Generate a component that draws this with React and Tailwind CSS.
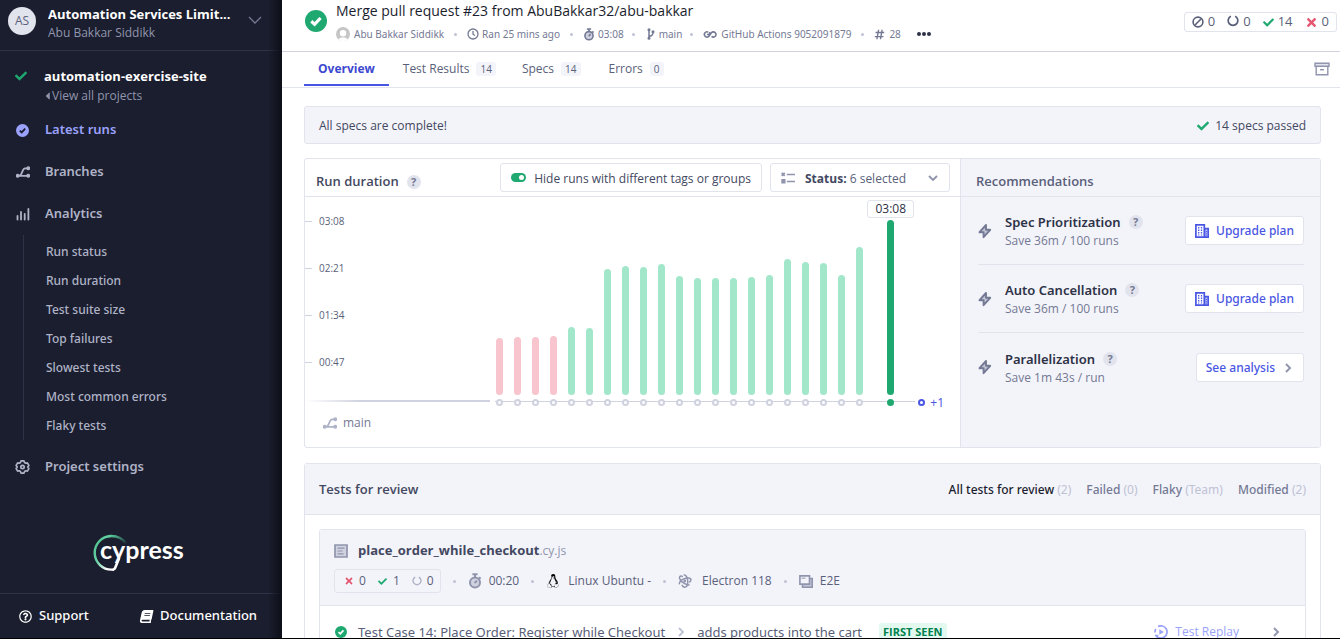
import React from "react";
import { FaCheck, FaTimes, FaLinux, FaBook, FaCaretLeft, FaHashtag, FaRegQuestionCircle } from "react-icons/fa";

const CheckCircle = ({ className }) => (
  <svg viewBox="0 0 16 16" className={className} aria-hidden="true">
    <circle cx="8" cy="8" r="8" fill="currentColor" />
    <path d="M4.6 8.2 7 10.4l4.3-4.6" fill="none" stroke="var(--tick)" strokeWidth="2.3" />
  </svg>
);

const BranchIcon = ({ className }) => (
  <svg viewBox="0 0 14 12" className={className} aria-hidden="true" fill="none" stroke="currentColor" strokeWidth="1.7">
    <path d="M1.5 9.8H12M3.5 9.5C6.5 9 6 2.5 9 2.3h3" />
    <circle cx="1.7" cy="9.8" r="1.1" fill="currentColor" />
    <circle cx="12.2" cy="9.8" r="1.1" fill="currentColor" />
    <circle cx="12.2" cy="2.2" r="1.1" fill="currentColor" />
  </svg>
);

const BarsIcon = () => (
  <svg viewBox="0 0 14 14" className="size-3.5" aria-hidden="true" fill="none" stroke="currentColor" strokeWidth="1.8" strokeLinecap="round">
    <path d="M1.5 9v3.5M5 5v7.5M8.7 7v5.5M12.4 2v10.5" />
  </svg>
);

const GearIcon = () => (
  <svg viewBox="0 0 16 16" className="size-4" aria-hidden="true" fill="none" stroke="currentColor" strokeWidth="1.8" strokeLinejoin="round">
    <path d="M6.4 1.5h3.2l.6 1.8 1.2.7 1.8-.4 1.6 2.7L13.6 8l1.2 1.7-1.6 2.7-1.8-.4-1.2.7-.6 1.8H6.4l-.6-1.8-1.2-.7-1.8.4-1.6-2.7L2.4 8 1.2 6.3l1.6-2.7 1.8.4 1.2-.7z" />
    <circle cx="8" cy="8" r="1.8" />
  </svg>
);

const Stopwatch = ({ className }) => (
  <svg viewBox="0 0 14 16" className={className} aria-hidden="true" fill="none" stroke="currentColor" strokeWidth="2">
    <circle cx="7" cy="9.5" r="5" fill="#d0d2e0" />
    <path d="M4.4 1.2h5.2M7 1.5v3M11 4.2l1.6 1.5M6.6 10 9 7.6" />
  </svg>
);

const Clock = () => (
  <svg viewBox="0 0 12 12" className="size-3" aria-hidden="true" fill="none" stroke="currentColor" strokeWidth="1.3">
    <circle cx="6" cy="6" r="5" />
    <path d="M6 3v3.2l2 1.3" />
  </svg>
);

const ForkIcon = () => (
  <svg viewBox="0 0 8 12" className="h-3 w-2" aria-hidden="true" fill="none" stroke="currentColor" strokeWidth="1.5">
    <path d="M2 1.5v9M2 8.2c3 0 4-1.2 4-4" />
    <circle cx="2" cy="1.8" r=".8" fill="currentColor" />
    <circle cx="2" cy="10.2" r=".8" fill="currentColor" />
    <circle cx="6" cy="3.8" r=".8" fill="currentColor" />
  </svg>
);

const LoopIcon = () => (
  <svg viewBox="0 0 16 10" className="h-[9px] w-3.5" aria-hidden="true" fill="none" stroke="currentColor" strokeWidth="1.8">
    <path d="M6 2.3A3 3 0 1 0 6.6 7.2L9.6 3a3 3 0 1 1 .2 4.2M4.5 5h3V2" />
  </svg>
);

const ArcIcon = ({ className }) => (
  <svg viewBox="0 0 12 12" className={className} aria-hidden="true" fill="none" stroke="currentColor" strokeWidth="1.7">
    <path d="M3.9 1.3A4.8 4.8 0 1 0 8.1 1.3" />
  </svg>
);

const BanIcon = () => (
  <svg viewBox="0 0 12 12" className="size-3" aria-hidden="true" fill="none" stroke="currentColor" strokeWidth="1.6">
    <circle cx="6" cy="6" r="4.9" />
    <path d="m2.8 9.2 6.4-6.4" />
  </svg>
);

const ArchiveIcon = () => (
  <svg viewBox="0 0 16 14" className="h-3.5 w-4" aria-hidden="true" fill="none" stroke="#9095ad" strokeWidth="1.4">
    <path d="M2.2 5v7.8h11.6V5" />
    <path d="M1 1.2h14v3H1z" fill="#e1e3ed" />
    <path d="M6 7.7h4" />
  </svg>
);

const Bolt = () => (
  <svg viewBox="0 0 14 16" className="h-4 w-3.5 text-[#747994]" aria-hidden="true" fill="#c2c5d6" stroke="currentColor" strokeWidth="1.9" strokeLinejoin="round">
    <path d="M8 2 1.5 9.2h4.1L5.6 14.2 12.2 6.8H8z" />
  </svg>
);

const Building = () => (
  <svg viewBox="0 0 14 14" className="size-3.5" aria-hidden="true" fill="none" stroke="currentColor" strokeWidth="1.7">
    <path d="M9.5 4.6h3.7v8.6H9.5z" fill="#c3c8fb" />
    <path d="M.9.9h8.4v12.3H.9z" fill="#fff" />
    <path d="M3.7 3v8.5M6.5 3v8.5" strokeDasharray="1.5 1" strokeWidth="1.3" />
    <path d="M11.4 7v5" strokeDasharray="1.2 1" strokeWidth="1" />
  </svg>
);

const Chevron = ({ className, d }) => (
  <svg viewBox="0 0 12 12" className={className} aria-hidden="true" fill="none" stroke="currentColor" strokeWidth="1.9">
    <path d={d} />
  </svg>
);
const RIGHT = "m4 2 4 4-4 4";

const StatusIcon = () => (
  <svg viewBox="0 0 14 12" className="h-3 w-3.5 text-[#9095ad]" aria-hidden="true" fill="none" stroke="currentColor" strokeWidth="1.7">
    <path d="m.7.9 3 3m0-3-3 3M5.8 2.5H14M5.8 9.5H14" />
    <path d="M.3 7h4.2v4.4H.3z" fill="currentColor" stroke="none" />
  </svg>
);

const SpecIcon = () => (
  <svg viewBox="0 0 14 14" className="size-3.5 text-[#9095ad]" aria-hidden="true" fill="#d0d2e0" stroke="currentColor" strokeWidth="1.7">
    <path d="M1 1h12v12H1z" />
    <path d="M3.5 4.2h7M3.5 7h5M3.5 9.8h6" strokeWidth="1.2" />
  </svg>
);

const ElectronIcon = () => (
  <svg viewBox="0 0 14 14" className="size-3.5 text-[#9095ad]" aria-hidden="true" fill="none" stroke="currentColor" strokeWidth="1.5" strokeLinecap="round">
    <path d="M4.3 2.4C3.3 2 2.2 2 1.7 2.7c-1 1.5 1 4.4 4.2 6.4 1.9 1.2 3.8 1.8 5.1 1.8" />
    <path d="M4.2 11.3C4.9 12.6 5.9 13.3 7 13.1c1.9-.3 3-3.2 2.7-6.5C9.4 3.3 7.9.8 6.2 1" />
    <path d="M1.3 9.7C1.7 7.3 4.3 5 7.7 4.2c2.3-.5 4.3-.2 5 .8.5.8.1 1.9-.9 2.9" />
    <circle cx="6.8" cy="7" r=".7" fill="currentColor" />
  </svg>
);

const WindowsIcon = () => (
  <svg viewBox="0 0 14 13" className="h-[13px] w-3.5 text-[#9095ad]" aria-hidden="true" fill="none" stroke="currentColor" strokeWidth="1.6">
    <path d="M3.5 10v2.2h9.7V3.5H11" fill="#c2c5d6" />
    <path d="M.9.9h9.6v8.2H.9z" fill="#f3f4fa" />
    <path d="M2.5 3.2h4" strokeWidth="1" />
  </svg>
);

const ReplayIcon = () => (
  <svg viewBox="0 0 14 14" className="size-3.5" aria-hidden="true" fill="none" stroke="currentColor" strokeWidth="1.7">
    <path d="M4 1.6A6.1 6.1 0 1 1 2 10.5M1 7.5A6 6 0 0 1 1.8 4M1 10.5h2.5V13" />
    <path d="m5.3 4.3 4.6 2.7-4.6 2.7z" fill="currentColor" stroke="none" />
  </svg>
);

const CypressLogo = () => (
  <svg viewBox="0 0 92 38" className="h-[38px] w-[92px]" role="img" aria-label="cypress">
    <defs>
      <linearGradient id="ring" x1="0" y1="0" x2="1" y2="1">
        <stop offset="0" stopColor="#4bc08c" />
        <stop offset=".45" stopColor="#69d3a7" />
        <stop offset=".8" stopColor="#fff" />
      </linearGradient>
      <linearGradient id="tip" x1="0" y1="0" x2="1" y2="1">
        <stop offset="0" stopColor="#55c595" />
        <stop offset="1" stopColor="#1b1e2e" />
      </linearGradient>
    </defs>
    <path d="M18 2A16.8 16.8 0 0 0 19 35.6L21 35.6" fill="none" stroke="url(#ring)" strokeWidth="2.4" />
    <path d="M17.5 2Q28 1.8 33.5 10" fill="none" stroke="url(#tip)" strokeWidth="2.4" />
    <path d="M19.5 35.7q1.9.1 2.7-2L26.2 24" fill="none" stroke="#fff" strokeWidth="2.6" />
    <text x="7" y="25" fill="#fff" fontFamily="Lato, sans-serif" fontWeight="700" fontSize="25">cypress</text>
  </svg>
);

const Dot = ({ className }) => <span className={`size-[3px] shrink-0 rounded-full bg-[#bfc2d4] ${className}`} />;

const Help = () => (
  <button type="button" aria-label="Help" className="flex size-3.5 items-center justify-center rounded-full bg-[#e1e3ed] text-[11px] leading-[14px] font-bold text-[#747994]">?</button>
);

const navItem = "flex h-[42px] items-center gap-[15px] pl-[15px] text-[13px] font-semibold";

const subItems = ["Run status", "Run duration", "Test suite size", "Top failures", "Slowest tests", "Most common errors", "Flaky tests"];

function Sidebar() {
  return (
    <aside className="relative flex w-[282px] shrink-0 flex-col bg-[#1b1e2e] text-[#afb3c7]">
      <button type="button" className="flex h-[51px] shrink-0 items-start gap-3 border-b border-[#2e3247] pt-[7px] pr-[20px] pl-2 text-left font-['Open_Sans',sans-serif]">
        <span className="flex size-7 shrink-0 items-center justify-center rounded-full bg-[#e1e3ed] text-[12px] text-[#5a5f7a]">AS</span>
        <span className="-mt-0.5 min-w-0 flex-1">
          <span className="block truncate text-[13px] leading-[18px] font-bold text-white">Automation Services Limit...</span>
          <span className="block text-[12px] leading-[19px] text-[#9095ad]">Abu Bakkar Siddikk</span>
        </span>
        <svg viewBox="0 0 14 14" className="mt-1.5 size-3.5 shrink-0 text-[#747994]" fill="none" stroke="currentColor" strokeWidth="1.3" aria-hidden="true"><path d="m1 4 6 6 6-6" /></svg>
      </button>

      <nav className="flex flex-col">
        <div className="flex gap-[17px] pt-4 pb-[3px] pl-[15px] font-['Open_Sans',sans-serif]">
          <FaCheck className="mt-[3px] size-3 text-[#1fa971]" />
          <div>
            <a href="#project" className="block text-[13px] leading-[19px] font-bold text-white">automation-exercise-site</a>
            <a href="#projects" className="flex items-center gap-px text-[12px] leading-5 text-[#9095ad]">
              <FaCaretLeft className="h-3 w-[7px]" />View all projects
            </a>
          </div>
        </div>
        <a href="#runs" className={`${navItem} text-[#9aa2fc] [--tick:#1b1e2e]`}><span className="flex w-[15px] justify-center"><CheckCircle className="size-[13px]" /></span>Latest runs</a>
        <a href="#branches" className={navItem}><span className="flex w-[15px] justify-center"><BranchIcon className="h-3 w-3.5" /></span>Branches</a>
        <a href="#analytics" className={navItem}><span className="flex w-[15px] justify-center"><BarsIcon /></span>Analytics</a>
        <ul className="ml-[23px] border-l border-[#2e3247] pt-0.5">
          {subItems.map((t) => (
            <li key={t}><a href="#analytics" className="block pl-[22px] text-[12px] leading-[29px] font-medium">{t}</a></li>
          ))}
        </ul>
        <a href="#settings" className={`${navItem} mt-1.5`}><span className="flex w-[15px] justify-center"><GearIcon /></span>Project settings</a>
      </nav>

      <div className="mt-auto flex justify-center pr-1 pb-[21px]"><CypressLogo /></div>
      <div className="flex h-[45px] shrink-0 items-center border-t border-[#2e3247] text-[13px] font-medium text-white">
        <a href="#support" className="flex flex-1 items-center gap-[7px] pl-[19px]"><FaRegQuestionCircle className="size-[13px]" />Support</a>
        <a href="#docs" className="flex items-center gap-[7px] pr-[25px]"><FaBook className="size-[13px] -skew-x-12" />Documentation</a>
      </div>
      <div className="pointer-events-none absolute inset-y-0 right-0 w-3.5 bg-linear-to-r from-transparent to-[#0d0f18]" />
    </aside>
  );
}

function Header() {
  return (
    <header className="flex h-[52px] shrink-0 items-start border-b border-[#d0d2e0] pr-[3px] pl-[23px]">
      <CheckCircle className="mt-2.5 size-[22px] text-[#1fa971] [--tick:#fff]" />
      <div className="ml-[9px]">
        <h1 className="pt-0.5 font-['Open_Sans',sans-serif] text-[14px] leading-[18px] font-medium text-[#1b1e2e]">Merge pull request #23 from AbuBakkar32/abu-bakkar</h1>
        <div className="mt-1 flex h-5 items-center text-[10px] whitespace-nowrap text-[#747994]">
          <svg viewBox="0 0 14 14" className="mr-1 size-3.5" aria-hidden="true">
            <circle cx="7" cy="7" r="7" fill="#c6c6c6" />
            <circle cx="7" cy="6.3" r="3.2" fill="#fff" />
            <path d="M2.6 12.4c1-2.6 7.8-2.6 8.8 0A7 7 0 0 1 2.6 12.4" fill="#fff" />
          </svg>
          Abu Bakkar Siddikk
          <Dot className="mx-2.5" /><Clock /><span className="ml-[3px]">Ran 25 mins ago</span>
          <Dot className="mx-2.5" /><Stopwatch className="h-[13px] w-3" /><span className="ml-[3px]">03:08</span>
          <Dot className="mr-3 ml-2" /><ForkIcon /><span className="ml-1">main</span>
          <Dot className="mr-2.5 ml-2" /><LoopIcon /><span className="ml-1">GitHub Actions 9052091879</span>
          <Dot className="mx-2.5" /><FaHashtag className="size-[11px]" /><span className="ml-1">28</span>
          <button type="button" aria-label="More" className="ml-4 flex gap-px">
            <span className="size-1 rounded-full bg-[#2e3247]" /><span className="size-1 rounded-full bg-[#2e3247]" /><span className="size-1 rounded-full bg-[#2e3247]" />
          </button>
        </div>
      </div>
      <div className="mt-3 ml-auto flex h-5 items-center gap-3 rounded-[3px] border border-[#e1e3ed] px-[7px] font-['Open_Sans',sans-serif] text-[13px] text-[#5a5f7a]">
        <span className="flex items-center gap-1"><BanIcon />0</span>
        <span className="flex items-center gap-1"><ArcIcon className="mb-0.5 size-3" />0</span>
        <span className="flex items-center gap-1"><FaCheck className="size-[11px] text-[#1fa971]" />14</span>
        <span className="flex items-center gap-1"><FaTimes className="size-[13px] text-[#e45770]" />0</span>
      </div>
    </header>
  );
}

function Tabs() {
  const badge = "rounded-[3px] bg-[#f3f4fa] px-1 text-[10px] leading-[14px] font-medium";
  return (
    <nav className="flex h-9 shrink-0 items-start border-b border-[#e1e3ed] pr-2.5 pl-[22px] font-['Open_Sans',sans-serif] text-[12px] leading-[34px] text-[#5a5f7a]">
      <a href="#overview" className="h-[34px] border-b-2 border-[#4956e3] px-3.5 font-bold text-[#3d48d0]">Overview</a>
      <a href="#results" className="ml-3.5 flex items-center gap-[7px]">Test Results <span className={badge}>14</span></a>
      <a href="#specs" className="ml-[26px] flex items-center gap-[7px]">Specs <span className={badge}>14</span></a>
      <a href="#errors" className="ml-7 flex items-center gap-[7px]">Errors <span className={badge}>0</span></a>
      <button type="button" aria-label="Archive" className="ml-auto flex h-[34px] items-center"><ArchiveIcon /></button>
    </nav>
  );
}

const runs = [
  [57, 0], [58, 0], [58, 0], [59, 0], [68, 1], [67, 1], [126, 1], [129, 1], [128, 1], [131, 1], [119, 1],
  [117, 1], [117, 1], [117, 1], [118, 1], [120, 1], [136, 1], [133, 1], [132, 1], [120, 1], [148, 1],
];

function RunDuration() {
  return (
    <section className="flex min-w-0 flex-1 flex-col font-['Open_Sans',sans-serif]">
      <div className="flex h-[38px] items-center justify-end gap-2 border-b border-[#e1e3ed] pr-[10px] pl-[11px]">
        <h2 className="mt-2 mr-auto flex items-center gap-2 text-[13px] font-semibold text-[#434861]">Run duration <Help /></h2>
        <label className="flex h-[29px] items-center gap-2 rounded-[3px] border border-[#e1e3ed] px-2.5 text-[12px] text-[#434861]">
          <input type="checkbox" role="switch" defaultChecked className="relative h-[9px] w-[15px] appearance-none rounded-full bg-[#1fa971] before:absolute before:top-0.5 before:right-0.5 before:size-[5px] before:rounded-full before:bg-white" />
          <span className="pt-0.5">Hide runs with different tags or groups</span>
        </label>
        <button type="button" aria-haspopup="listbox" className="flex h-[29px] w-[180px] items-center rounded-[3px] border border-[#e1e3ed] px-2.5 text-[12px] text-[#5a5f7a]">
          <StatusIcon /><span className="ml-2.5 pt-0.5"><b className="text-[#434861]">Status:</b> 6 selected</span>
          <Chevron className="ml-auto size-3 text-[#9095ad]" d="m2 4 4 4 4-4" />
        </button>
      </div>
      <div className="flex h-[212px] justify-between">
        <ul className="pt-px text-[10px] leading-[47px] text-[#5a5f7a]">
          {["03:08", "02:21", "01:34", "00:47"].map((t) => (
            <li key={t} className="flex items-center gap-[7px]"><span className="h-px w-[7px] bg-[#d0d2e0]" />{t}</li>
          ))}
        </ul>
        <div className="relative flex flex-1 items-end justify-end gap-[11px] pr-4 pb-[3px]">
          <div className="absolute right-[45px] bottom-[7px] left-[150px] h-px bg-[#d0d2e0]" />
          {runs.map(([h, ok], i) => (
            <a href="#run" key={i} aria-label={`Run ${i + 7}`} className="z-10 flex w-[7px] flex-col gap-1">
              <span className={`rounded-full ${ok ? "bg-[#a3e7cb]" : "bg-[#f8c4cd]"}`} style={{ height: h }} />
              <span className="size-[7px] rounded-full border-2 border-[#d0d2e0] bg-white" />
            </a>
          ))}
          <a href="#run" aria-label="Run 28" className="relative ml-[13px] flex w-[7px] flex-col gap-1">
            <span className="absolute -top-5 -left-5 w-[47px] rounded-[3px] border border-[#e1e3ed] bg-white text-center text-[12px] leading-4 text-[#2e3247]">03:08</span>
            <span className="h-[175px] rounded-full bg-[#1fa971]" />
            <span className="size-[7px] rounded-full bg-[#1fa971]" />
          </a>
          <a href="#next" className="z-10 ml-[13px] flex items-center gap-[5px] text-[12px] leading-[7px] text-[#4956e3]">
            <span className="size-[7px] rounded-full border-2 border-[#4956e3] bg-white" />+1
          </a>
        </div>
      </div>
      <div className="-mt-[9px] h-0.5 w-[185px] bg-linear-to-r from-transparent via-[#d0d2e0] via-30% to-[#d0d2e0]" />
      <div className="mt-[11px] flex items-center gap-1.5 pl-[18px] text-[12px] leading-5 text-[#747994]">
        <BranchIcon className="h-3 w-3.5 text-[#afb3c7]" />main
      </div>
    </section>
  );
}

const recs = [
  ["Spec Prioritization", "Save 36m / 100 runs", true],
  ["Auto Cancellation", "Save 36m / 100 runs", true],
  ["Parallelization", "Save 1m 43s / run", false],
];

function Recommendations() {
  return (
    <section className="w-[360px] shrink-0 border-l border-[#e1e3ed] bg-[#f3f4fa]">
      <h2 className="flex h-[38px] items-center border-b border-[#e1e3ed] pt-2 pl-[15px] font-['Open_Sans',sans-serif] text-[13px] font-semibold text-[#5a5f7a]">Recommendations</h2>
      <ul className="pr-4 pl-[17px]">
        {recs.map(([name, save, upgrade]) => (
          <li key={name} className="flex h-[68px] items-center border-b border-[#e1e3ed] last:border-b-0">
            <Bolt />
            <div className="ml-[13px] pt-px">
              <h3 className="flex items-center gap-2 text-[13px] leading-5 font-semibold text-[#2e3247]">{name} <Help /></h3>
              <p className="font-['Open_Sans',sans-serif] text-[12px] leading-[18px] text-[#747994]">{save}</p>
            </div>
            <button type="button" className="ml-auto flex h-[29px] items-center gap-[7px] rounded-[3px] border border-[#e1e3ed] bg-white px-[9px] pt-px text-[12px] font-medium text-[#4956e3]">
              {upgrade && <Building />}
              {upgrade ? "Upgrade plan" : "See analysis"}
              {!upgrade && <Chevron className="size-3 text-[#9095ad]" d={RIGHT} />}
            </button>
          </li>
        ))}
      </ul>
    </section>
  );
}

function Review() {
  const filters = [["All tests for review", "(2)"], ["Failed", "(0)"], ["Flaky", "(Team)"], ["Modified", "(2)"]];
  return (
    <section className="mt-px rounded-[3px] border border-[#e1e3ed]">
      <div className="flex h-[51px] items-center justify-between border-b border-[#e1e3ed] bg-[#f3f4fa] px-3.5 pt-0.5">
        <h2 className="font-['Open_Sans',sans-serif] text-[13px] font-semibold text-[#434861]">Tests for review</h2>
        <div className="flex gap-[15px] text-[12px]">
          {filters.map(([t, n], i) => (
            <button type="button" key={t} className={i === 0 ? "font-medium text-[#1b1e2e]" : "font-medium text-[#747994]"}>{t} <span className="font-normal text-[#bfc2d4]">{n}</span></button>
          ))}
        </div>
      </div>
      <div className="px-3.5 pt-3.5 pb-6">
        <article className="rounded-[3px] border border-[#e1e3ed]">
          <div className="h-[76px] border-b border-[#e1e3ed] bg-[#f3f4fa] px-3.5 pt-2.5 font-['Open_Sans',sans-serif] text-[12px] text-[#5a5f7a]">
            <h3 className="flex items-center gap-[10px] text-[13px] leading-5">
              <SpecIcon /><span><b className="font-bold text-[#434861]">place_order_while_checkout</b><span className="text-[12px] text-[#9095ad]">.cy.js</span></span>
            </h3>
            <div className="mt-2 flex h-6 items-center whitespace-nowrap">
              <div className="flex h-6 items-center gap-3 rounded-[3px] border border-[#e1e3ed] pr-1.5 pl-[9px]">
                <span className="flex items-center gap-[5px]"><FaTimes className="size-[10px] text-[#e45770]" />0</span>
                <span className="flex items-center gap-1.5"><FaCheck className="size-[9px] text-[#1fa971]" />1</span>
                <span className="flex items-center gap-[5px]"><ArcIcon className="size-[10px] text-[#afb3c7]" />0</span>
              </div>
              <Dot className="mx-3" /><Stopwatch className="h-4 w-3.5 text-[#9095ad]" /><span className="ml-[7px]">00:20</span>
              <Dot className="mx-3" /><FaLinux className="size-3.5 text-black" /><span className="ml-2">Linux Ubuntu -</span>
              <Dot className="mx-3" /><ElectronIcon /><span className="ml-2.5">Electron 118</span>
              <Dot className="mx-3" /><WindowsIcon /><span className="ml-[7px]">E2E</span>
            </div>
          </div>
          <div className="flex h-[52px] items-center px-[15px] text-[13px] leading-[14px] text-[#5a5f7a]">
            <CheckCircle className="size-3 text-[#1fa971] [--tick:#fff]" />
            <a href="#test" className="ml-[11px] flex items-center gap-2.5">Test Case 14: Place Order: Register while Checkout <Chevron className="size-3 text-[#bfc2d4]" d={RIGHT} /> adds products into the cart</a>
            <span className="ml-[17px] rounded-[3px] bg-[#e3f9f0] px-1 pt-[3px] pb-1 font-['Open_Sans',sans-serif] text-[11px] leading-[12px] font-bold text-[#00814d]">FIRST SEEN</span>
            <a href="#replay" className="ml-auto flex items-center gap-[7px] font-['Open_Sans',sans-serif] text-[12px] font-medium text-[#9aa2fc]"><ReplayIcon />Test Replay</a>
            <Chevron className="mr-2 ml-[31px] size-3 text-[#9095ad]" d={RIGHT} />
          </div>
        </article>
      </div>
    </section>
  );
}

export default function App() {
  return (
    <div className="flex h-screen flex-col overflow-hidden border-b border-black bg-white font-['Noto_Sans',sans-serif]">
      <div className="flex min-h-0 flex-1">
        <Sidebar />
        <div className="flex min-w-0 flex-1 flex-col">
          <Header />
          <Tabs />
          <main className="flex min-h-0 flex-1 flex-col gap-[14px] overflow-hidden pt-[18px] pr-[19px] pl-[22px]">
            <div className="flex h-[38px] shrink-0 items-center justify-between rounded-[3px] border border-[#e1e3ed] bg-[#f3f4fa] px-3.5 pt-0.5 font-['Open_Sans',sans-serif] text-[12px] text-[#434861]">
              <p>All specs are complete!</p>
              <p className="flex items-center gap-1.5"><FaCheck className="size-3 text-[#1fa971]" />14 specs passed</p>
            </div>
            <div className="flex h-[290px] shrink-0 overflow-hidden rounded-[3px] border border-[#e1e3ed]">
              <RunDuration />
              <Recommendations />
            </div>
            <Review />
          </main>
        </div>
      </div>
    </div>
  );
}
